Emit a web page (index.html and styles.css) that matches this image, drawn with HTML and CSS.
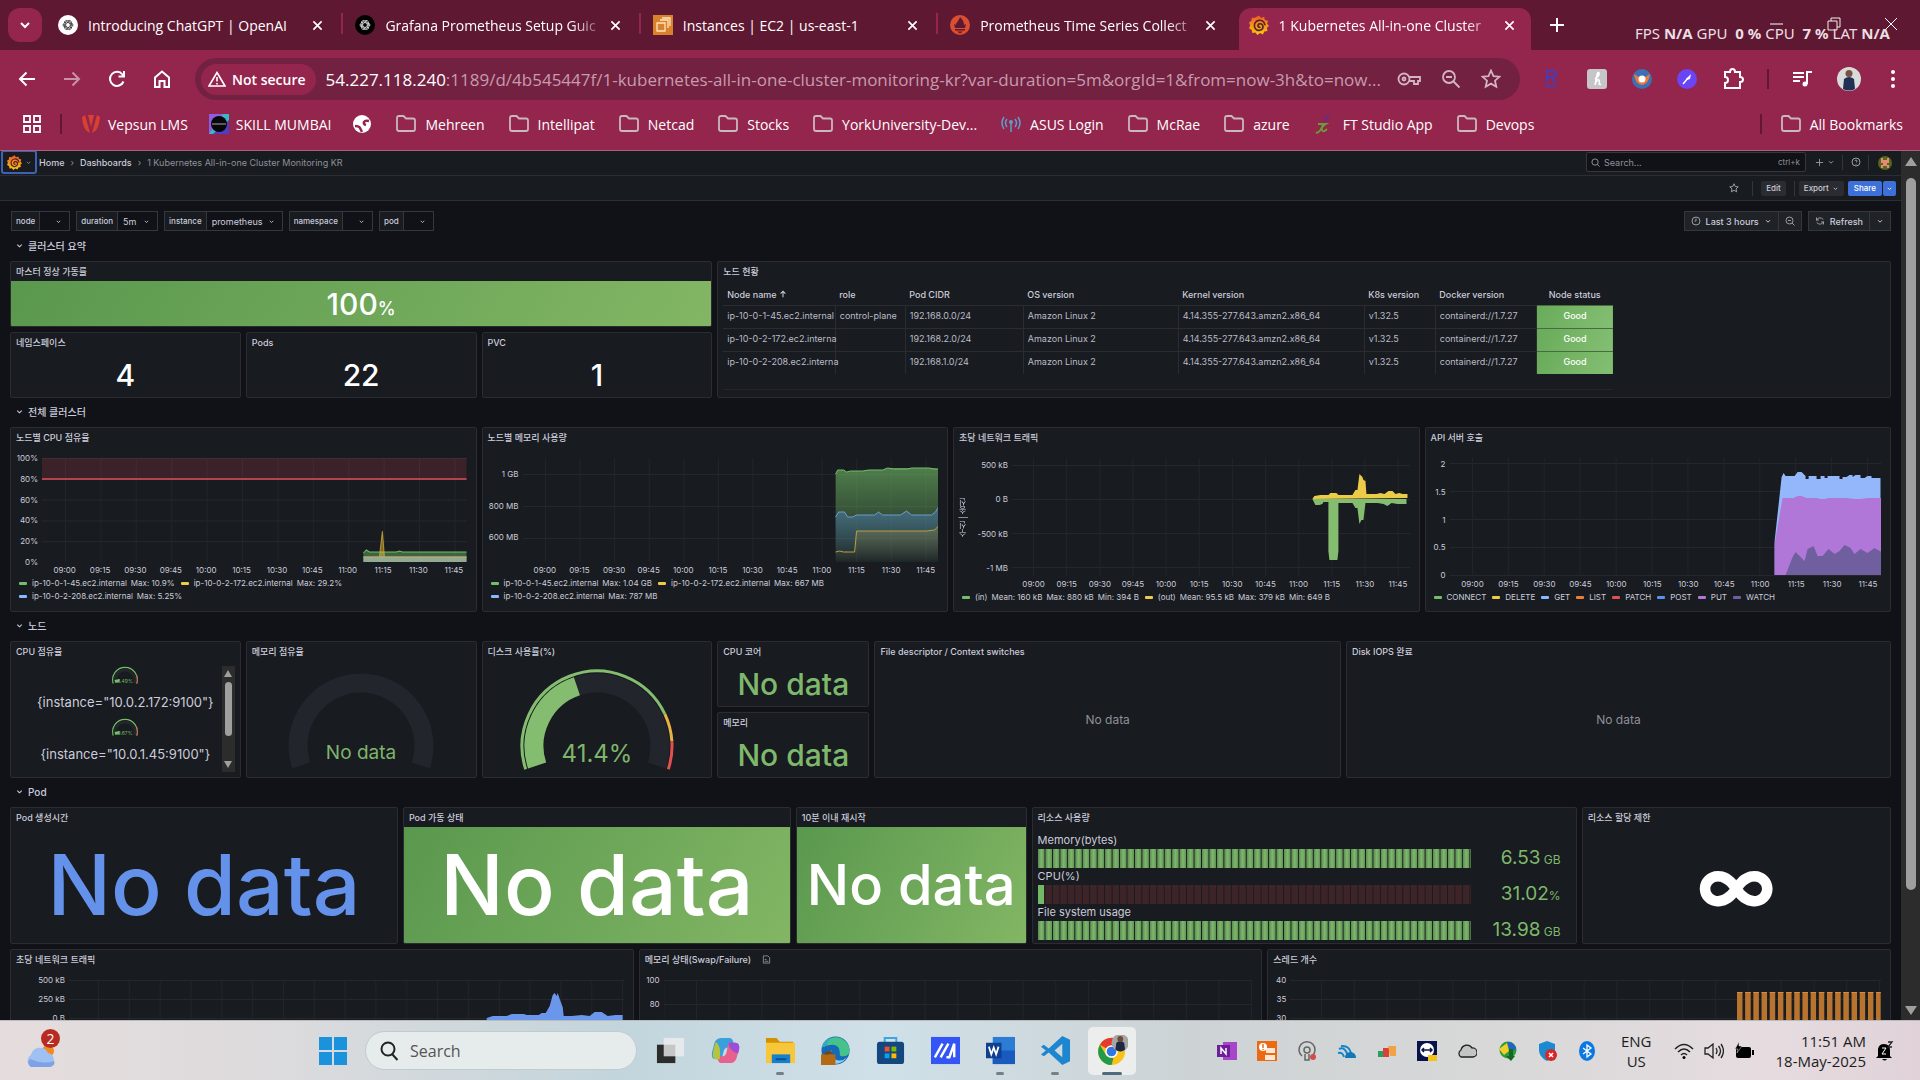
FILE: index.html
```html
<!DOCTYPE html>
<html lang="en">
<head>
<meta charset="utf-8">
<title>1 Kubernetes All-in-one Cluster Monitoring KR</title>
<link rel="stylesheet" href="styles.css">
</head>
<body>
<svg class="defs" aria-hidden="true">
  <defs>
    <symbol id="x" viewBox="0 0 12 12"><path d="M1.500 1.500l9 9M10.500 1.500l-9 9" fill="none" stroke="currentColor" stroke-width="1.800"/></symbol>
    <symbol id="chev" viewBox="0 0 10 10"><path d="M2.500 4l2.500 2.500 2.500-2.500" fill="none" stroke="currentColor" stroke-width="1.200"/></symbol>
    <symbol id="folder" viewBox="0 0 20 20"><path d="M1 4q0-2 2-2h4.500l2.500 2.500H17q2 0 2 2V15q0 2-2 2H3q-2 0-2-2z" fill="none" stroke="#c9b8be" stroke-width="1.800"/></symbol>
    <symbol id="knot" viewBox="0 0 24 24"><g fill="none" stroke="currentColor" stroke-width="1.300"><g id="kn"><path d="M12 5.200a3.600 3.600 0 0 1 6 2.800v5l-6 3.500"/><path d="M12 18.800a3.600 3.600 0 0 1-6-2.800v-5l6-3.500"/></g><use href="#kn" transform="rotate(60 12 12)"/><use href="#kn" transform="rotate(120 12 12)"/></g></symbol>
    <linearGradient id="gf" x1="0" y1="1" x2="0" y2="0"><stop offset="0" stop-color="#fbca0a"/><stop offset="1" stop-color="#f05a28"/></linearGradient>
    <symbol id="grafana" viewBox="0 0 24 24"><path d="M12 .5l2.500 3 3.700-1.300.8 3.900 3.900.9-1.200 3.600L24 13l-2.600 2.600.8 3.700-3.900.6-1.600 3.400-3.300-1.600L10 24l-2.200-3-3.800.7-.6-3.800L0 16l1.400-3.500L0 9l3-2 .2-3.800 3.800.2z" fill="url(#gf)"/><path d="M19 11.500C18 7.500 14.500 5.800 11.500 6.400 8 7.100 5.800 10.500 6.600 14c.7 3.200 3.700 5 6.600 4.300 2.500-.7 4-2.900 3.500-5.100-.5-2-2.300-3.100-4.100-2.600-1.500.5-2.100 1.900-1.700 3.100.4.900 1.200 1.300 2.100 1" fill="none" stroke="#54222f" stroke-width="2" stroke-linecap="round"/></symbol>
  </defs>
</svg>

<header class="browser">
  <div class="tabstrip">
    <button class="tabmenu" aria-label="Search tabs"><svg width="16" height="16" viewBox="0 0 16 16"><path d="M4 6l4 4 4-4" fill="none" stroke="#fff" stroke-width="2"/></svg></button>
    <div class="tabs">
      <div class="tab"><svg class="fav" viewBox="0 0 20 20"><circle cx="10" cy="10" r="10" fill="#fff"/><use href="#knot" x="3" y="3" width="14" height="14" color="#222"/></svg><span class="tt">Introducing ChatGPT | OpenAI</span><button aria-label="Close tab"><svg><use href="#x"/></svg></button></div>
      <div class="tab"><svg class="fav" viewBox="0 0 20 20"><circle cx="10" cy="10" r="10" fill="#000"/><use href="#knot" x="3" y="3" width="14" height="14" color="#fff"/></svg><span class="tt fade">Grafana Prometheus Setup Guic</span><button aria-label="Close tab"><svg><use href="#x"/></svg></button></div>
      <div class="tab"><svg class="fav" viewBox="0 0 20 20"><path d="M0 0h20v20H0z" fill="#d9822b"/><path d="M4 8h8v8H4zM7 5h8v8M9 3h8v8" fill="none" stroke="#ffe2bf" stroke-width="1.300"/></svg><span class="tt">Instances | EC2 | us-east-1</span><button aria-label="Close tab"><svg><use href="#x"/></svg></button></div>
      <div class="tab"><svg class="fav" viewBox="0 0 20 20"><circle cx="10" cy="10" r="10" fill="#da4e31"/><path d="M10 2c3 3 4 5 4 8l2-1-1 4H5l-1-4 2 1c0-3 3-4 4-8zM5 14h10v1.500H5zM7 16.500h6l-3 2z" fill="#5f1831"/></svg><span class="tt fade">Prometheus Time Series Collect</span><button aria-label="Close tab"><svg><use href="#x"/></svg></button></div>
      <div class="tab active"><svg class="fav"><use href="#grafana"/></svg><span class="tt fade">1 Kubernetes All-in-one Cluster</span><button aria-label="Close tab"><svg><use href="#x"/></svg></button></div>
    </div>
    <button class="plus" aria-label="New tab"><svg width="14" height="14" viewBox="0 0 14 14"><path d="M7 0v14M0 7h14" stroke="#fff" stroke-width="2"/></svg></button>
    <div class="winbtns">
      <svg width="14" height="14" viewBox="0 0 14 14"><path d="M0 7h13" stroke="#fff"/></svg>
      <svg width="14" height="14" viewBox="0 0 14 14"><path d="M1 4h9v9H1zM4 4V1h9v9h-3" fill="none" stroke="#eee"/></svg>
      <svg width="14" height="14" viewBox="0 0 14 14"><path d="M1 1l12 12M13 1L1 13" stroke="#fff"/></svg>
    </div>
    <div class="perf">FPS <b>N/A</b> GPU <b>&nbsp;0 %</b> CPU <b>&nbsp;7 %</b> LAT <b>N/A</b></div>
  </div>

  <div class="toolbar">
    <nav class="navbtns">
      <button aria-label="Back"><svg viewBox="0 0 20 20"><path d="M18 10H3M9.500 3.500L3 10l6.500 6.500"/></svg></button>
      <button aria-label="Forward" class="dim"><svg viewBox="0 0 20 20"><path d="M2 10h15M10.500 3.500L17 10l-6.500 6.500"/></svg></button>
      <button aria-label="Reload"><svg viewBox="0 0 20 20"><path d="M16.500 12.500A7 7 0 1 1 15.500 5.500L17 7M17 2v5.500h-5.500"/></svg></button>
      <button aria-label="Home"><svg viewBox="0 0 20 20"><path d="M3 8.500l7-6 7 6V18h-4.500v-6h-5v6H3z"/></svg></button>
    </nav>
    <div class="omni">
      <button class="chip"><svg width="18" height="16" viewBox="0 0 18 16"><path d="M9 1.500L17 15H1zM9 6v4.500M9 12v1.500" fill="none" stroke="#fff" stroke-width="1.600"/></svg>Not secure</button>
      <span class="url"><b>54.227.118.240</b>:1189/d/4b545447f/1-kubernetes-all-in-one-cluster-monitoring-kr?var-duration=5m&amp;orgId=1&amp;from=now-3h&amp;to=now...</span>
      <svg class="oi" width="24" height="20" viewBox="0 0 24 20"><circle cx="7" cy="10" r="5.500"/><circle cx="7" cy="10" r="1.500"/><path d="M12 8h11v4h-2v3h-4v-3h-5"/></svg>
      <svg class="oi" width="20" height="20" viewBox="0 0 20 20"><circle cx="8" cy="8" r="6"/><path d="M12.500 12.500l6 6M5 8h6"/></svg>
      <svg class="oi" width="20" height="20" viewBox="0 0 20 20"><path d="M10 1.500l2.500 5.600 6 .6-4.500 4 1.300 6L10 14.600 4.700 17.700l1.300-6-4.500-4 6-.6z"/></svg>
    </div>
    <div class="exts">
      <svg width="20" height="20" viewBox="0 0 20 20"><path d="M5 14V2h6q3 0 3 3t-3 3.500H5M10 8.500l4 5.500" fill="none" stroke="#513aa8" stroke-width="2.500"/><path d="M3 17.500h12" stroke="#513aa8" stroke-width="2"/></svg>
      <svg width="20" height="20" viewBox="0 0 20 20"><rect width="20" height="20" rx="3" fill="#c6c6c6"/><path d="M8 16l2-10q1-4 2-2t-4 6M8 15q3-6 4-4t0 4q1 1 2 0" fill="none" stroke="#fff" stroke-width="1.600"/></svg>
      <svg width="20" height="20" viewBox="0 0 20 20"><circle cx="10" cy="10" r="10" fill="#3d6fb4"/><path d="M2 5l5 3h6l5-3q-1 10-8 11Q3 15 2 5z" fill="#e97a3a"/><circle cx="10" cy="10" r="3.500" fill="#fff"/></svg>
      <svg width="20" height="20" viewBox="0 0 20 20"><circle cx="10" cy="10" r="10" fill="#6a45f5"/><path d="M6 15l5-6" stroke="#fff" stroke-width="1.500"/><path d="M9 10l5-5-1 5-3 1z" fill="#fff"/></svg>
      <svg width="22" height="22" viewBox="0 0 22 22"><path d="M3 4h5q0-3 2.500-3T13 4h5v5q3 0 3 2.500T18 14v6H3v-5q3 0 3-3T3 9z" fill="none" stroke="#fff" stroke-width="2"/></svg>
      <i class="bar"></i>
      <svg width="20" height="20" viewBox="0 0 20 20"><path d="M1 4h11M1 8h11M1 12h7M15 15V3h5" fill="none" stroke="#fff" stroke-width="2"/><circle cx="13" cy="15" r="2.500" fill="#fff"/></svg>
      <svg width="24" height="24" viewBox="0 0 24 24"><circle cx="12" cy="12" r="12" fill="#d8dcd8"/><path d="M6 22l1-10q5-4 10 0l1 10q-6 3-12 0z" fill="#1f2f55"/><circle cx="12" cy="6.500" r="3.500" fill="#7a5140"/></svg>
      <svg class="dots" width="6" height="20" viewBox="0 0 6 20"><g fill="#fff"><circle cx="3" cy="3" r="2"/><circle cx="3" cy="10" r="2"/><circle cx="3" cy="17" r="2"/></g></svg>
    </div>
  </div>

  <nav class="bookmarks">
    <svg width="18" height="18" viewBox="0 0 18 18"><path d="M1 1h6v6H1zM11 1h6v6h-6zM1 11h6v6H1zM11 11h6v6h-6z" fill="none" stroke="#fff" stroke-width="1.800"/></svg>
    <i class="bar"></i>
    <a href="#" class="site"><svg viewBox="0 0 20 20"><path d="M1 3l3-2 5 18q-7-2-8-16zM19 3l-3-2-5 18q7-2 8-16zM7 1h6l-3 12z" fill="#d8402f"/></svg>Vepsun LMS</a>
    <a href="#" class="site"><svg viewBox="0 0 20 20"><path d="M0 0h20v20H0z" fill="#3fb6c4"/><path d="M0 0h14L0 20z" fill="#8b5fe0"/><path d="M20 6v14H4z" fill="#4c3fc0"/><circle cx="10" cy="10" r="8" fill="#07070c"/><path d="M3 10h14" stroke="#aaa"/></svg>SKILL MUMBAI</a>
    <a href="#" aria-label="Web page"><svg viewBox="0 0 20 20"><circle cx="10" cy="10" r="9" fill="#fff"/><path d="M17 7q-4-1-5 1t2 3M3 12q4 0 5 2t2 4" fill="none" stroke="#94254d" stroke-width="2.500"/></svg></a>
    <a href="#"><svg><use href="#folder"/></svg>Mehreen</a>
    <a href="#"><svg><use href="#folder"/></svg>Intellipat</a>
    <a href="#"><svg><use href="#folder"/></svg>Netcad</a>
    <a href="#"><svg><use href="#folder"/></svg>Stocks</a>
    <a href="#"><svg><use href="#folder"/></svg>YorkUniversity-Dev...</a>
    <a href="#"><svg viewBox="0 0 20 20"><g fill="none" stroke="#5e9ccb" stroke-width="1.500"><path d="M6 13q-3-4 0-8M3 15Q-1 9 3 3M14 13q3-4 0-8M17 15q4-6 0-12M10 9v9"/></g><circle cx="10" cy="8" r="2" fill="#5e9ccb"/></svg>ASUS Login</a>
    <a href="#"><svg><use href="#folder"/></svg>McRae</a>
    <a href="#"><svg><use href="#folder"/></svg>azure</a>
    <a href="#"><svg viewBox="0 0 20 20"><path d="M15 1q-4 2-5 9" fill="none" stroke="#6b2a8a" stroke-width="2"/><path d="M4 10h8q-5 3-4 6t5-1M9 10q-2 8-7 9" fill="none" stroke="#6f9a35" stroke-width="1.800"/></svg>FT Studio App</a>
    <a href="#"><svg><use href="#folder"/></svg>Devops</a>
    <span class="grow"></span>
    <i class="bar"></i>
    <a href="#"><svg><use href="#folder"/></svg>All Bookmarks</a>
  </nav>
</header>

<div class="view">
<div class="app">
  <div class="gbar">
    <button class="glogo" aria-label="Menu"><svg width="15" height="15"><use href="#grafana"/></svg><svg width="7" height="7"><use href="#chev"/></svg></button>
    <nav class="crumbs"><a href="#">Home</a><i>›</i><a href="#">Dashboards</a><i>›</i><span>1 Kubernetes All-in-one Cluster Monitoring KR</span></nav>
    <label class="search"><svg width="9" height="9" viewBox="0 0 10 10"><circle cx="4.500" cy="4.500" r="3.500"/><path d="M7 7l2.500 2.500"/></svg><input type="text" placeholder="Search..." aria-label="Search"><kbd>ctrl+k</kbd></label>
    <button class="plain" aria-label="New"><svg width="9" height="9" viewBox="0 0 10 10"><path d="M5 1v8M1 5h8"/></svg><svg width="8" height="8"><use href="#chev"/></svg></button>
    <i class="sep"></i>
    <button class="plain" aria-label="Help"><svg width="10" height="10" viewBox="0 0 10 10"><circle cx="5" cy="5" r="4"/><path d="M4 4q0-1 1-1t1 1-1 1.500M5 7v.8"/></svg></button>
    <i class="sep"></i>
    <svg class="me" width="15" height="15" viewBox="0 0 15 15"><circle cx="8" cy="8" r="7" fill="#56661f"/><path d="M4 3h2v2h4V3h2v5h-2v2h2v3h-2v-2H6v2H4v-3h2V8H4z" fill="#e58a74"/></svg>
  </div>
  <div class="gbar second">
    <button class="plain" aria-label="Star"><svg width="10" height="10" viewBox="0 0 20 20"><path stroke-width="2" d="M10 1.500l2.500 5.600 6 .6-4.500 4 1.300 6L10 14.600 4.700 17.700l1.300-6-4.500-4 6-.6z"/></svg></button>
    <i class="sep"></i>
    <button class="btn">Edit</button>
    <i class="sep"></i>
    <button class="btn">Export<svg width="7" height="7"><use href="#chev"/></svg></button>
    <span class="pair"><button class="btn blue">Share</button><button class="btn blue" aria-label="More"><svg width="7" height="7"><use href="#chev"/></svg></button></span>
  </div>

  <div class="vars">
    <div class="var"><label for="v1">node</label><span class="sel w30"><select id="v1"><option></option></select><svg><use href="#chev"/></svg></span></div>
    <div class="var"><label for="v2">duration</label><span class="sel w40"><select id="v2"><option>5m</option></select><svg><use href="#chev"/></svg></span></div>
    <div class="var"><label for="v3">instance</label><span class="sel w76"><select id="v3"><option>prometheus</option></select><svg><use href="#chev"/></svg></span></div>
    <div class="var"><label for="v4">namespace</label><span class="sel w30"><select id="v4"><option></option></select><svg><use href="#chev"/></svg></span></div>
    <div class="var"><label for="v5">pod</label><span class="sel w30"><select id="v5"><option></option></select><svg><use href="#chev"/></svg></span></div>
    <span class="grow"></span>
    <div class="time">
      <button><svg width="10" height="10" viewBox="0 0 10 10"><circle cx="5" cy="5" r="4"/><path d="M5 2.500V5H3.500"/></svg>Last 3 hours<svg width="8" height="8"><use href="#chev"/></svg></button>
      <button aria-label="Zoom out"><svg width="10" height="10" viewBox="0 0 10 10"><circle cx="4.500" cy="4.500" r="3.500"/><path d="M7 7l2.500 2.500M3 4.500h3"/></svg></button>
    </div>
    <div class="time">
      <button><svg width="10" height="10" viewBox="0 0 10 10"><path d="M1.500 4.500V1.500M1.500 4h2.500M1.700 3.800Q4.500 0 8.300 3.500M8.500 5.500v3M8.500 6H6M8.300 6.200Q5.500 10 1.700 6.500"/></svg>Refresh</button>
      <button aria-label="Refresh interval"><svg width="8" height="8"><use href="#chev"/></svg></button>
    </div>
  </div>

  <h2 class="row"><svg><use href="#chev"/></svg>클러스터 요약</h2>
  <div class="grid two">
    <section class="panel c9"><h3>마스터 정상 가동률</h3><div class="stat fill s30"><span>100<small>%</small></span></div></section>
    <section class="panel c15 tall"><h3>노드 현황</h3>
      <table>
        <colgroup><col class="k1"><col class="k2"><col class="k3"><col class="k4"><col class="k5"><col class="k6"><col class="k7"><col class="k8"></colgroup>
        <thead><tr><th>Node name <svg width="8" height="8" viewBox="0 0 10 10"><path d="M5 9V2M2 4.500L5 1.500l3 3" fill="none" stroke="currentColor" stroke-width="1.300"/></svg></th><th>role</th><th>Pod CIDR</th><th>OS version</th><th>Kernel version</th><th>K8s version</th><th>Docker version</th><th>Node status</th></tr></thead>
        <tbody>
          <tr><td>ip-10-0-1-45.ec2.internal</td><td>control-plane</td><td>192.168.0.0/24</td><td>Amazon Linux 2</td><td>4.14.355-277.643.amzn2.x86_64</td><td>v1.32.5</td><td>containerd://1.7.27</td><td>Good</td></tr>
          <tr><td>ip-10-0-2-172.ec2.interna</td><td></td><td>192.168.2.0/24</td><td>Amazon Linux 2</td><td>4.14.355-277.643.amzn2.x86_64</td><td>v1.32.5</td><td>containerd://1.7.27</td><td>Good</td></tr>
          <tr><td>ip-10-0-2-208.ec2.interna</td><td></td><td>192.168.1.0/24</td><td>Amazon Linux 2</td><td>4.14.355-277.643.amzn2.x86_64</td><td>v1.32.5</td><td>containerd://1.7.27</td><td>Good</td></tr>
        </tbody>
      </table>
      <div class="tfoot"></div>
    </section>
    <section class="panel c3"><h3>네임스페이스</h3><div class="stat s30">4</div></section>
    <section class="panel c3"><h3>Pods</h3><div class="stat s30">22</div></section>
    <section class="panel c3"><h3>PVC</h3><div class="stat s30">1</div></section>
  </div>

  <h2 class="row"><svg><use href="#chev"/></svg>전체 클러스터</h2>
  <div class="grid charts">
    <section class="panel c6"><h3>노드별 CPU 점유율</h3>
      <div class="chart cpu">
        <div class="y"><span>100%</span><span>80%</span><span>60%</span><span>40%</span><span>20%</span><span>0%</span></div>
        <div class="plot"><svg viewBox="0 0 424 104" preserveAspectRatio="none">
          <path d="M0 0h424v21H0z" fill="#f2495c" opacity=".16"/><path d="M0 21h424" stroke="#b5434f" stroke-width="2"/>
          <path d="M321 104V95l3-3 3 2h27l3-1 3 1h64v10z" fill="#73bf69" opacity=".45"/><path d="M321 95l3-3 3 2h27l3-1 3 1h64" fill="none" stroke="#73bf69"/>
          <path d="M321 104v-5h103v5z" fill="#93a994"/><path d="M321 99h103" stroke="#9cb8c0"/>
          <path d="M321 99h16l3-26 2 26h82" fill="#eab839" fill-opacity=".5" stroke="#c9a63a" stroke-opacity=".8"/></svg></div>
        <div class="x"><span>09:00</span><span>09:15</span><span>09:30</span><span>09:45</span><span>10:00</span><span>10:15</span><span>10:30</span><span>10:45</span><span>11:00</span><span>11:15</span><span>11:30</span><span>11:45</span></div>
      </div>
      <div class="legend"><span class="g">ip-10-0-1-45.ec2.internal <em>Max: 10.9%</em></span><span class="ye">ip-10-0-2-172.ec2.internal <em>Max: 29.2%</em></span><span class="b">ip-10-0-2-208.ec2.internal <em>Max: 5.25%</em></span></div>
    </section>
    <section class="panel c6"><h3>노드별 메모리 사용량</h3>
      <div class="chart mem">
        <div class="y"><span>1 GB</span><span>800 MB</span><span>600 MB</span></div>
        <div class="plot"><svg viewBox="0 0 416 104" preserveAspectRatio="none">
          <defs><linearGradient id="m1" x1="0" y1="0" x2="0" y2="1"><stop offset="0" stop-color="#73bf69" stop-opacity=".6"/><stop offset="1" stop-color="#73bf69" stop-opacity=".05"/></linearGradient>
          <linearGradient id="m2" x1="0" y1="0" x2="0" y2="1"><stop offset="0" stop-color="#5794f2" stop-opacity=".38"/><stop offset="1" stop-color="#5794f2" stop-opacity=".02"/></linearGradient>
          <linearGradient id="m3" x1="0" y1="0" x2="0" y2="1"><stop offset="0" stop-color="#eab839" stop-opacity=".22"/><stop offset="1" stop-color="#eab839" stop-opacity="0"/></linearGradient></defs>
          <path d="M313 104V16l2-4h6l3 2 4-1h12l6-1h14l5-2h46l5 1v93z" fill="url(#m1)"/><path d="M313 16l2-4h6l3 2 4-1h12l6-1h14l5-2 6 1h14l4-1h18l4 1 5 0" fill="none" stroke="#73bf69"/>
          <path d="M313 104V59l3-5h6l3 5h5l4-2h18l4-3 4 3h18l6-4 5 4h20l4-3 3-5v55z" fill="url(#m2)"/><path d="M313 59l3-5h6l3 5h5l4-2h18l4-3 4 3h18l6-4 5 4h20l4-3 3-5" fill="none" stroke="#6f9ccb"/>
          <path d="M313 104V94h19l2-21h70l8-1 4-4v36z" fill="url(#m3)"/><path d="M313 94l4-1 4 1h11l2-21h70l8-1 4-4" fill="none" stroke="#b7a140"/></svg></div>
        <div class="x"><span>09:00</span><span>09:15</span><span>09:30</span><span>09:45</span><span>10:00</span><span>10:15</span><span>10:30</span><span>10:45</span><span>11:00</span><span>11:15</span><span>11:30</span><span>11:45</span></div>
      </div>
      <div class="legend"><span class="g">ip-10-0-1-45.ec2.internal <em>Max: 1.04 GB</em></span><span class="ye">ip-10-0-2-172.ec2.internal <em>Max: 667 MB</em></span><span class="b">ip-10-0-2-208.ec2.internal <em>Max: 787 MB</em></span></div>
    </section>
    <section class="panel c6"><h3>초당 네트워크 트래픽</h3>
      <div class="chart net">
        <div class="ylab">수신 | 송신</div>
        <div class="y"><span>500 kB</span><span>0 B</span><span>-500 kB</span><span>-1 MB</span></div>
        <div class="plot"><svg viewBox="0 0 397 118" preserveAspectRatio="none">
          <path d="M300 41l2-3 6-1h8l2-2h6l2 2h14l3-5h2l2-16 3 3 1 3 2 1 1 13h10l4-1 4 1 4-3h4l3 3 4-1 3 1h5v4z" fill="#eccb48"/>
          <path d="M300 41l3 6h4l3-1 1-2h5v49l1 9h8l1-9V45h14l3 5h2l2 16 2-4 2 0 2-17h12l6 1 4 2 4-3 6 1h9v-5z" fill="#84bd6f"/></svg></div>
        <div class="x"><span>09:00</span><span>09:15</span><span>09:30</span><span>09:45</span><span>10:00</span><span>10:15</span><span>10:30</span><span>10:45</span><span>11:00</span><span>11:15</span><span>11:30</span><span>11:45</span></div>
      </div>
      <div class="legend"><span class="g">(in) <em>Mean: 160 kB</em> <em>Max: 880 kB</em> <em>Min: 394 B</em></span><span class="ye">(out) <em>Mean: 95.5 kB</em> <em>Max: 379 kB</em> <em>Min: 649 B</em></span></div>
    </section>
    <section class="panel c6"><h3>API 서버 호출</h3>
      <div class="chart api">
        <div class="y"><span>2</span><span>1.5</span><span>1</span><span>0.5</span><span>0</span></div>
        <div class="plot"><svg viewBox="0 0 432 118" preserveAspectRatio="none">
          <path d="M325 117V83l7-64 2-4 2 3h9l3-4h4l4 4v3h3v-3h8v3h4v-3h4v2h3v-2h12v3h3v-2h4l3-2h3v2l3-2h5v3h4l3-2h4v2h9v97z" fill="#94b6fa"/>
          <path d="M325 117V86l8-46h11l4-2h4l5 2h10l4 1h4l4-1h18l8 1h6l8-1h13v77z" fill="#b077d9"/>
          <path d="M336 117l7-18 3-5 4 4 5 5 3-12 6-3 4 10 5 0 6-7 6 5 5-3 5-6 6 3 4 6 6-5 7 4 7-5 7 4v23z" fill="#6f5f9f"/></svg></div>
        <div class="x"><span>09:00</span><span>09:15</span><span>09:30</span><span>09:45</span><span>10:00</span><span>10:15</span><span>10:30</span><span>10:45</span><span>11:00</span><span>11:15</span><span>11:30</span><span>11:45</span></div>
      </div>
      <div class="legend"><span class="g">CONNECT</span><span class="ye">DELETE</span><span class="b">GET</span><span class="o">LIST</span><span class="r">PATCH</span><span class="db">POST</span><span class="p">PUT</span><span class="dp">WATCH</span></div>
    </section>
  </div>

  <h2 class="row"><svg><use href="#chev"/></svg>노드</h2>
  <div class="grid two">
    <section class="panel c3 tall"><h3>CPU 점유율</h3>
      <div class="minis">
        <div class="minilist">
          <svg width="28" height="20" viewBox="0 0 28 20"><path d="M2.300 17.500A12.300 12.300 0 1 1 25.700 17.500" fill="none" stroke="#73bf69" stroke-width="1.200"/><path d="M25.200 9.500a12.300 12.300 0 0 1 .5 8" fill="none" stroke="#e0504f" stroke-width="1.200"/><path d="M4.500 17a10 10 0 1 1 19 0" fill="none" stroke="#24262c" stroke-width="3"/><path d="M4.500 17l-1-3 5-1v3z" fill="#73bf69"/><text x="14" y="17" font-size="5" text-anchor="middle" fill="#73bf69">6.49%</text></svg>
          <p>{instance="10.0.2.172:9100"}</p>
          <svg width="28" height="20" viewBox="0 0 28 20"><path d="M2.300 17.500A12.300 12.300 0 1 1 25.700 17.500" fill="none" stroke="#73bf69" stroke-width="1.200"/><path d="M25.200 9.500a12.300 12.300 0 0 1 .5 8" fill="none" stroke="#e0504f" stroke-width="1.200"/><path d="M4.500 17a10 10 0 1 1 19 0" fill="none" stroke="#24262c" stroke-width="3"/><path d="M4.500 17l-1-3 5-1v3z" fill="#73bf69"/><text x="14" y="17" font-size="5" text-anchor="middle" fill="#73bf69">9.67%</text></svg>
          <p>{instance="10.0.1.45:9100"}</p>
        </div>
        <div class="minibar"><i class="up"></i><i class="thumb"></i><i class="down"></i></div>
      </div>
    </section>
    <section class="panel c3 tall"><h3>메모리 점유율</h3>
      <div class="gauge"><svg width="160" height="108" viewBox="0 0 160 108"><path d="M20.100 99.500A63 63 0 1 1 139.900 99.500" fill="none" stroke="#22252b" stroke-width="19"/><text x="80" y="93" font-size="19" text-anchor="middle" fill="#7eb56c">No data</text></svg></div>
    </section>
    <section class="panel c3 tall"><h3>디스크 사용률(%)</h3>
      <div class="gauge"><svg width="160" height="108" viewBox="0 0 160 108"><path d="M20.100 99.500A63 63 0 1 1 139.900 99.500" fill="none" stroke="#22252b" stroke-width="19"/><path d="M20.100 99.500A63 63 0 0 1 59.900 20.300" fill="none" stroke="#84bd70" stroke-width="19"/><g fill="none" stroke-width="3"><path d="M8.700 103.200A75 75 0 0 1 147.900 48.100" stroke="#84bd70"/><path d="M147.900 48.100A75 75 0 0 1 154.900 75.300" stroke="#e8b143"/><path d="M154.900 75.300A75 75 0 0 1 151.300 103.200" stroke="#e0504f"/></g><text x="80" y="96" font-size="24" text-anchor="middle" fill="#7eb56c">41.4%</text></svg></div>
    </section>
    <section class="panel c2"><h3>CPU 코어</h3><div class="stat s30 green">No data</div></section>
    <section class="panel c6 tall"><h3>File descriptor / Context switches</h3><div class="none">No data</div></section>
    <section class="panel c7 tall"><h3>Disk IOPS 완료</h3><div class="none">No data</div></section>
    <section class="panel c2"><h3>메모리</h3><div class="stat s30 green">No data</div></section>
  </div>

  <h2 class="row"><svg><use href="#chev"/></svg>Pod</h2>
  <div class="grid pods">
    <section class="panel c5"><h3>Pod 생성시간</h3><div class="stat s84 bluetext">No data</div></section>
    <section class="panel c5"><h3>Pod 가동 상태</h3><div class="stat fill s84">No data</div></section>
    <section class="panel c3"><h3>10분 이내 재시작</h3><div class="stat fill s56">No data</div></section>
    <section class="panel c7"><h3>리소스 사용량</h3>
      <div class="bars">
        <div class="bargauge"><p>Memory(bytes)</p><div class="cells full"></div><output>6.53<small> GB</small></output></div>
        <div class="bargauge"><p>CPU(%)</p><div class="cells low"></div><output>31.02<small>%</small></output></div>
        <div class="bargauge"><p>File system usage</p><div class="cells full"></div><output>13.98<small> GB</small></output></div>
      </div>
    </section>
    <section class="panel c4"><h3>리소스 할당 제한</h3><div class="stat inf">∞</div></section>

    <section class="panel c8"><h3>초당 네트워크 트래픽</h3>
      <div class="chart n2"><div class="y"><span>500 kB</span><span>250 kB</span><span>0 B</span></div>
      <div class="plot"><svg viewBox="0 0 555 118" preserveAspectRatio="none"><path d="M418 40v-2l6-2h14l5-2h12l3 1h12l3-2h4l4-7 3-11 2-2 2 3 1-3 2 6 3 8 1 9h8l10-1 8 1 5-4h7l6 4 8-1 7 0v6z" fill="#6a97ec"/></svg></div></div>
    </section>
    <section class="panel c8"><h3>메모리 상태(Swap/Failure)<svg width="9" height="9" viewBox="0 0 10 10"><path d="M1.500 1h5L8.500 3v6h-7zM3 5h2M3 7h4M6 5v0" fill="none" stroke="#8e9099"/></svg></h3>
      <div class="chart n3"><div class="y"><span>100</span><span>80</span></div><div class="plot"></div></div>
    </section>
    <section class="panel c8"><h3>스레드 개수</h3>
      <div class="chart n4"><div class="y"><span>40</span><span>35</span><span>30</span></div>
      <div class="plot"><svg viewBox="0 0 592 118" preserveAspectRatio="none"><defs><pattern id="th" x="448" y="0" width="8.200" height="118" patternUnits="userSpaceOnUse"><path d="M0 0h5.500v118H0z" fill="#b8742f"/><path d="M0 0h5.500v2H0z" fill="#f2933a"/></pattern></defs><path d="M448 12h144v106H448z" fill="url(#th)"/><path d="M448 12.500h144" stroke="#dd8a3c" stroke-dasharray="5.500 2.700"/></svg></div></div>
    </section>
  </div>
</div>
<div class="scroll"><i class="up"></i><i class="thumb"></i><i class="down"></i></div>
</div>

<footer class="taskbar">
  <button class="weather" aria-label="Weather"><svg width="36" height="40" viewBox="0 0 36 40"><circle cx="24" cy="20" r="6" fill="#f08a24"/><path d="M7 36a7 7 0 0 1 0-12 9 9 0 0 1 17-2 7.500 7.500 0 0 1 2 14z" fill="#9fc0f2"/><path d="M7 36q-5-4-1-8 14 6 24 2 2 4-4 6z" fill="#7da3e6"/></svg><b>2</b></button>
  <button aria-label="Start"><svg width="30" height="30" viewBox="0 0 30 30"><path d="M1 1h13v13H1zM16 1h13v13H16zM1 16h13v13H1zM16 16h13v13H16z" fill="#1a93dc"/></svg></button>
  <label class="tsearch"><svg width="20" height="20" viewBox="0 0 20 20"><circle cx="9" cy="8" r="6.500" fill="none" stroke="#222" stroke-width="2"/><path d="M13 13l5.500 6" stroke="#222" stroke-width="2"/></svg><input type="text" placeholder="Search" aria-label="Search Windows"></label>
  <div class="apps">
    <button aria-label="Task view"><svg viewBox="0 0 32 32"><path d="M2 10h19v19H2z" fill="#2c2c2c"/><path d="M9 3h21v19H9z" fill="#ededed" opacity=".8"/></svg></button>
    <button aria-label="Copilot"><svg viewBox="0 0 32 32"><path d="M12 3h8q3 0 4 4l2 6h-7q-4 0-5 4l-2 8H6q-5 0-4-7l3-11q2-4 7-4z" fill="#3aa0dd"/><path d="M20 29h-8q-3 0-4-4l-1-3h5q4 0 5-4l2-10h7q5 0 4 7l-3 10q-2 4-7 4z" fill="#e8618c"/><path d="M4 14l2-7q6 4 4 18H6q-5 0-2-11z" fill="#b6c53c"/><path d="M19 8h7q5 0 4 7l-1 4q-9-2-10-11z" fill="#9b4fd8"/></svg></button>
    <button class="run" aria-label="File Explorer"><svg viewBox="0 0 32 32"><path d="M1 3h11l3 4h14v6H1z" fill="#d29200"/><path d="M1 8h30v21H1z" fill="#f8c63a"/><path d="M7 20h19v9H7z" fill="#1580cf"/><path d="M11 24h11v2H11z" fill="#0b4f8f"/></svg></button>
    <button aria-label="Edge"><svg viewBox="0 0 32 32"><circle cx="16" cy="16" r="14.500" fill="#1668b8"/><path d="M2 13A14.500 14.500 0 0 1 30.500 16q0 6-7 6-4 0-3-4 0-7-7-8-7 0-11.500 3z" fill="#45c38b"/><path d="M2 13Q7 3 17 2q-9 1-10 9z" fill="#2aa5dc"/><path d="M12 15q-3 9 6 11 6 1 10-3-5 7-13 7Q5 27 12 15z" fill="#8fd0ee"/><path d="M1 20h15v11H1z" fill="#b36a12"/><path d="M5 17h7v3H5z" fill="#7b4507"/></svg></button>
    <button aria-label="Store"><svg viewBox="0 0 32 32"><path d="M10 8V3h12v5" fill="none" stroke="#39a7e6" stroke-width="2"/><rect x="2" y="7" width="28" height="23" rx="3" fill="#14477f"/><path d="M10 12h5v5h-5z" fill="#f25022"/><path d="M17 12h5v5h-5z" fill="#7fba00"/><path d="M10 19h5v5h-5z" fill="#00a4ef"/><path d="M17 19h5v5h-5z" fill="#ffb900"/></svg></button>
    <button aria-label="MyASUS"><svg viewBox="0 0 32 32"><path d="M1 2h30v28H1z" fill="#3455f5"/><path d="M5 23l8-14M11 23l8-14M17 23h3l5-14v14" fill="none" stroke="#fff" stroke-width="2.500"/></svg></button>
    <button class="run" aria-label="Word"><svg viewBox="0 0 32 32"><path d="M8 2h23v28H8z" fill="#2b7cd3"/><path d="M8 16h23v14H8z" fill="#185abd"/><path d="M1 8h16v16H1z" fill="#103f91"/><path d="M4 12l2.500 8L9 13l2.500 7L14 12" fill="none" stroke="#fff" stroke-width="1.800"/></svg></button>
    <button class="run" aria-label="VS Code"><svg viewBox="0 0 32 32"><path d="M23 1l8 4v22l-8 4L9 18l-5 4-3-2 5-4-5-4 3-2 5 4zM23 9l-8 7 8 7z" fill="#1d86cf" fill-rule="evenodd"/></svg></button>
    <button class="run on" aria-label="Chrome"><svg viewBox="0 0 32 32"><circle cx="15" cy="17" r="14" fill="#fbc116"/><path d="M15 17L3 10A14 14 0 0 1 28 11H15z" fill="#e33b2e"/><path d="M15 31A14 14 0 0 1 3 10l7 12 7 2z" fill="#229a4a"/><circle cx="15" cy="17" r="6.500" fill="#fff"/><circle cx="15" cy="17" r="5" fill="#2f77e5"/><circle cx="24" cy="8" r="9" fill="#a5a7a4"/><path d="M19 15l1-7q4-3 8 0l1 7q-5 4-10 0z" fill="#1d2843"/><circle cx="24" cy="4" r="3" fill="#6f4a3a"/></svg></button>
  </div>
  <span class="grow"></span>
  <div class="tray">
    <svg viewBox="0 0 20 20"><path d="M6 1h14v18H6z" fill="#a746c9"/><path d="M0 4h13v12H0z" fill="#6c1f96"/><path d="M4 13V7l5 6V7" fill="none" stroke="#fff" stroke-width="1.500"/></svg>
    <svg viewBox="0 0 20 20"><path d="M0 0h20v20H0z" fill="#ec6a12"/><path d="M9 7h9v5H9zM8 14h10v5H8z" fill="#ffe7d6"/><circle cx="6" cy="6" r="4" fill="#fff"/><path d="M6 3v4M6 8v1" stroke="#ec6a12" stroke-width="1.500"/></svg>
    <svg viewBox="0 0 20 20"><g fill="none" stroke="#666" stroke-width="1.500"><circle cx="10" cy="9" r="3"/><path d="M5 15a8 8 0 1 1 10 0M8 13v6h4v-6"/></g><circle cx="16" cy="16" r="3" fill="#d84a4a"/></svg>
    <svg viewBox="0 0 20 20"><path d="M2 8q6-3 9 7M1 12q5-1 6 4M4 5q8-1 10 7" fill="none" stroke="#1485c9" stroke-width="2"/><path d="M8 17q0-6 6-6 5 1 5 6z" fill="#1376b5"/></svg>
    <svg viewBox="0 0 20 20"><path d="M1 10h5v6H1z" fill="#279f63"/><path d="M6 7h6v9H6z" fill="#d8403a"/><path d="M11 5h8v10h-6z" fill="#f0a244"/></svg>
    <svg viewBox="0 0 20 20"><path d="M0 0h20v20H0z" fill="#09124a"/><circle cx="10" cy="9" r="7" fill="#fff"/><path d="M5 9h10M7 7L5 9l2 2M13 7l2 2-2 2" fill="none" stroke="#09124a" stroke-width="1.500"/><path d="M11 14h9v6h-9z" fill="#f3c317"/></svg>
    <svg viewBox="0 0 20 20"><path d="M4 16a4 4 0 0 1 0-7 6 6 0 0 1 11-2 4.500 4.500 0 0 1 1 9z" fill="#c4c4c4" stroke="#222" stroke-width="1.300"/></svg>
    <svg viewBox="0 0 20 20"><circle cx="11" cy="9" r="8.500" fill="#2c9b3c"/><path d="M10 1a8 8 0 0 1 9 7l-6 3z" fill="#2362c8"/><path d="M2 8l8-6 2 8-5 4z" fill="#f0cf28"/><path d="M12 8v7h-3l5 5 4-5h-2V8z" fill="#14691f"/></svg>
    <svg viewBox="0 0 20 20"><path d="M10 0l8 3v6q0 7-8 11Q2 16 2 9V3z" fill="#1b8ad0"/><circle cx="14" cy="14" r="6" fill="#d32929"/><path d="M12 12l4 4M16 12l-4 4" stroke="#fff" stroke-width="1.500"/></svg>
    <svg viewBox="0 0 20 20"><ellipse cx="10" cy="10" rx="8" ry="10" fill="#0a78e0"/><path d="M6 7l8 6-4 3V4l4 3-8 6" fill="none" stroke="#fff" stroke-width="1.300"/></svg>
  </div>
  <div class="lang">ENG<br>US</div>
  <div class="sys">
    <svg width="20" height="18" viewBox="0 0 20 18"><path d="M1 7q9-9 18 0M4 10q6-6 12 0M7 13q3-3 6 0" fill="none" stroke="#222" stroke-width="1.500"/><circle cx="10" cy="15.500" r="1.500"/></svg>
    <svg width="20" height="18" viewBox="0 0 20 18"><path d="M1 6h3l5-4v14l-5-4H1zM12 6q2 3 0 6M14.500 4q4 5 0 10M17 2q5 7 0 14" fill="none" stroke="#222" stroke-width="1.300"/></svg>
    <svg width="20" height="18" viewBox="0 0 20 18"><rect x="2" y="5" width="15" height="11" rx="2"/><path d="M18 8h2v5h-2z"/><path d="M5 0L1 7h3l-1 4 5-7H5z" stroke="#ddd" stroke-width=".5"/></svg>
  </div>
  <div class="clock">11:51 AM<br>18-May-2025</div>
  <svg class="bell" width="18" height="20" viewBox="0 0 18 20"><path d="M2 15V8q1-5 6-5 6 0 6 6v6l2 2H0zM6 18h5q-2 3-5 0z"/><path d="M12 1h4l-4 5h4" fill="none" stroke="#222" stroke-width="1.300"/><path d="M6 7h4l-4 6h4" fill="none" stroke="#fff"/></svg>
</footer>
</body>
</html>
```
FILE: styles.css
```css
* { box-sizing: border-box; }
body { margin: 0; height: 100vh; overflow: hidden; display: flex; flex-direction: column; background: #111217; font-family: Inter, "Noto Sans CJK KR", sans-serif; color: #ccccdc; }
button { border: 0; background: none; padding: 0; margin: 0; font: inherit; color: inherit; display: flex; align-items: center; justify-content: center; }
input, select { font: inherit; color: inherit; border: 0; background: none; padding: 0; margin: 0; min-width: 0; outline: 0; }
a { color: inherit; text-decoration: none; }
p, h2, h3 { margin: 0; font-weight: 400; }
i, em { font-style: normal; }
.defs { position: absolute; width: 0; height: 0; }
.grow { flex: 1; }

/* Browser chrome */
.browser { flex: none; height: 151px; background: #94254d; border-bottom: 1px solid #a5607c; font-family: "Open Sans", sans-serif; color: #fff; }
.tabstrip { position: relative; height: 50px; display: flex; background: #5f1831; padding: 8px 0 0 8px; }
.tabmenu { width: 34px; height: 34px; border-radius: 12px; background: #94254d; margin-right: 4px; }
.tabs { display: grid; grid-template-columns: repeat(5, minmax(0, 1fr)); width: 78%; max-width: 1487px; }
.tab { min-width: 0; display: flex; align-items: center; height: 42px; padding: 0 18px 8px 12px; font-size: 14px; border-right: 2px solid transparent; border-image: linear-gradient(transparent 6px, #94254d 6px 26px, transparent 26px) 1; }
.tab:nth-child(4) { border-image: none; }
.tab.active { background: #94254d; border: 0; border-radius: 12px 12px 0 0; margin: 0 2px 0 3px; padding: 0 16px 8px 10px; }
.fav { width: 20px; height: 20px; flex: none; }
.tt { flex: 1; min-width: 0; white-space: nowrap; margin: 0 14px 0 10px; }
.fade { mask-image: linear-gradient(90deg, #000 88%, #0005); }
.tab button svg { width: 11px; height: 11px; }
.plus { width: 34px; height: 34px; margin-left: 7px; }
.winbtns { position: absolute; right: 22px; top: 17px; display: flex; gap: 43px; }
.perf { position: absolute; right: 30px; top: 23px; font: 15px/20px "Noto Sans", sans-serif; color: #e9dfe3; }
.toolbar { display: flex; align-items: center; padding: 8px 24px 0 17px; }
.navbtns { display: flex; gap: 25px; margin-right: 23px; }
.navbtns svg { width: 20px; height: 20px; fill: none; stroke: #fff; stroke-width: 2; }
.dim { opacity: .5; }
.omni { flex: 1; min-width: 0; height: 42px; border-radius: 21px; background: #732141; display: flex; align-items: center; padding: 0 19px 0 6px; gap: 20px; }
.chip { height: 31px; flex: none; border-radius: 16px; background: #94254d; padding: 0 10px 0 7px; gap: 6px; font-size: 14px; font-weight: 600; margin-right: -10px; }
.url { flex: 1; min-width: 0; white-space: nowrap; font-size: 17px; color: #c79bad; }
.url b { font-weight: 400; color: #fff; }
.oi { flex: none; fill: none; stroke: #d3b4c0; stroke-width: 1.800; }
.exts { display: flex; align-items: center; gap: 25px; margin-left: 22px; }
.exts .bar { margin: 0 -2px; }
.dots { margin-left: 4px; }
.bar { width: 2px; height: 20px; background: #5f1831; flex: none; }
.bookmarks { display: flex; align-items: center; height: 50px; gap: 24px; padding: 0 17px 2px 23px; font-size: 14px; }
.bookmarks .bar { margin: 0 -5px; }
.bookmarks a { display: flex; align-items: center; gap: 9px; white-space: nowrap; }
.bookmarks .site { gap: 7px; margin-right: -3px; }
.bookmarks a svg { width: 20px; height: 20px; }

/* Grafana frame */
.view { flex: 1; min-height: 0; display: flex; }
.app { flex: 1; min-width: 0; overflow: hidden; }
.scroll { width: 19px; background: #2c2c2c; display: flex; flex-direction: column; align-items: center; justify-content: space-between; padding: 6px 0 5px; }
.up { border: 6px solid transparent; border-top: 0; border-bottom: 9px solid #9f9f9f; }
.down { border: 6px solid transparent; border-bottom: 0; border-top: 9px solid #9f9f9f; }
.thumb { width: 10px; border-radius: 5px; background: #9f9f9f; }
.scroll .thumb { flex: 0 0 83%; margin: 0 0 104px; }
.gbar { height: 25px; background: #181b1f; border-bottom: 1px solid #2c2e33; display: flex; align-items: center; padding: 0 9px 2px 1px; font-size: 9px; }
.glogo { width: 36px; height: 24px; border: 2px solid #3d62b5; border-radius: 3px; gap: 3px; color: #8e9099; }
.crumbs { display: flex; gap: 6px; flex: 1; padding-left: 2px; color: #8e9099; }
.crumbs a { color: #ccccdc; font-weight: 500; }
.search { width: 220px; height: 20px; border: 1px solid #35373d; border-radius: 2px; background: #111217; display: flex; align-items: center; gap: 4px; padding: 0 5px 0 4px; color: #8e9099; margin-right: 9px; }
.search input { flex: 1; }
.search input::placeholder { color: #8e9099; opacity: 1; }
kbd { font: 8px Inter, sans-serif; }
.gbar svg, .time svg { fill: none; stroke: #9a9ba5; flex: none; }
.glogo svg { stroke: none; }
.plain { gap: 3px; color: #9a9ba5; }
.sep { width: 1px; height: 15px; background: #33353b; margin: 0 8px 0 7px; }
.gbar .me { stroke: none; }
.second { justify-content: flex-end; padding: 0 5px 0 0; }
.second .sep { margin: 0 8px 0 13px; }
.second .btn + .sep { margin: 0 4px 0 8px; }
.btn { height: 15px; padding: 0 5px; border-radius: 2px; background: #2a2c31; font-size: 8px; font-weight: 500; gap: 3px; }
.pair { display: flex; gap: 1px; margin-left: 4px; }
.pair .btn:first-child { padding: 0 6px; }
.blue { background: #3d71d9; color: #fff; }
.pair .btn:last-child { padding: 0 3px; }
.vars { display: flex; padding: 10px 10px 1px 11px; gap: 6px; }
.var { display: flex; height: 20px; font-size: 9px; }
.var label { border: 1px solid #35373d; background: #181b1f; padding: 0 4px; line-height: 18px; font-size: 8px; font-weight: 500; }
.sel { display: flex; align-items: center; border: 1px solid #35373d; border-left: 0; padding: 0 7px 0 5px; color: #ccccdc; }
.sel select { flex: 1; appearance: none; }
.sel svg { width: 7px; height: 7px; flex: none; }
.w30 { width: 30px; }
.w40 { width: 40px; }
.w76 { width: 76px; }
.time { display: flex; height: 20px; font-size: 9px; font-weight: 500; }
.time button { border: 1px solid #35373d; background: #1f2227; padding: 0 6px; gap: 5px; }
.time button + button { border-left: 0; }
.row { height: 29px; display: flex; align-items: center; gap: 4px; padding: 0 0 2px 15px; font-size: 10px; font-weight: 500; }
.row svg { width: 9px; height: 9px; }

/* Panels */
.grid { display: grid; grid-template-columns: repeat(24, minmax(0, 1fr)); gap: 5px; padding: 0 10px; }
.two { grid-template-rows: 66px 66px; }
.charts { grid-template-rows: 185px; }
.pods { grid-template-rows: 137px 185px; }
.panel { display: flex; flex-direction: column; background: #181b1f; border: 1px solid #2a2c31; border-radius: 2px; overflow: hidden; min-width: 0; }
.panel h3 { flex: none; height: 19px; padding: 0 5px 1px; display: flex; align-items: center; gap: 11px; font-size: 9px; font-weight: 500; white-space: nowrap; }
.c2 { grid-column: span 2; } .c3 { grid-column: span 3; } .c4 { grid-column: span 4; } .c5 { grid-column: span 5; }
.c6 { grid-column: span 6; } .c7 { grid-column: span 7; } .c8 { grid-column: span 8; } .c9 { grid-column: span 9; } .c15 { grid-column: span 15; }
.tall { grid-row: span 2; }
.stat { flex: 1; min-height: 0; display: flex; align-items: center; justify-content: center; font-weight: 500; color: #fff; line-height: 1; white-space: nowrap; }
.fill { background: linear-gradient(120deg, #5a984e, #82b664); }
.s30 { font-size: 30px; } .s56 { font-size: 56px; } .s84 { font-size: 84px; }
.stat small { font-size: 18px; }
.green { color: #7eb86c; }
.bluetext { color: #6491ea; }
.inf { font-size: 81px; font-weight: 700; }
.none { flex: 1; display: flex; align-items: center; justify-content: center; font-size: 12px; color: #8e9099; }

table { border-collapse: collapse; table-layout: fixed; width: 890px; margin: 4px 0 0 5px; font-size: 9px; color: #bcbcc9; }
.k1 { width: 112px; } .k2 { width: 70px; } .k3 { width: 118px; } .k4 { width: 155px; } .k5 { width: 186px; } .k6 { width: 71px; } .k7 { width: 101px; } .k8 { width: 77px; }
th { height: 20px; padding: 0 4px; text-align: left; font-weight: 500; color: #ccccdc; white-space: nowrap; }
td { height: 23px; padding: 0 0 2px 4px; border-top: 1px solid #2a2c31; border-right: 1px solid #2a2c31; white-space: nowrap; }
th:last-child { text-align: center; }
td:last-child { background: linear-gradient(120deg, #68ab59, #84bf73); text-align: center; color: #fff; padding: 0 0 2px; border-color: #4a6a44; border-right: 0; font-weight: 500; }
.tfoot { width: 890px; margin: 15px 0 0 5px; border-top: 1px solid #24262b; }

/* Time series */
.chart { display: grid; grid-template-columns: var(--axis) 1fr; grid-template-rows: var(--h) 15px; padding: 11px 9px 0 0; }
.y { display: flex; flex-direction: column; justify-content: space-between; margin: var(--ym); padding-right: 4px; text-align: right; font-size: 8px; line-height: 12px; white-space: nowrap; }
.plot { background: linear-gradient(90deg, #212429 1px, transparent 1px) var(--gx) 0 / var(--gw) 100%, linear-gradient(#24272c 1px, transparent 1px) 0 var(--gy) / 100% var(--gh); }
.plot svg { display: block; width: 100%; height: 100%; }
.x { grid-column: 2; display: grid; grid-template-columns: repeat(12, 1fr); margin: 0 -5px 0 5px; text-align: center; font-size: 8px; line-height: 16px; }
.cpu { --axis: 31px; --h: 104px; --ym: -6px 0; --gx: 23px; --gw: 8.333%; --gy: 0px; --gh: 20%; }
.mem { --axis: 40px; --h: 104px; --ym: 10px 0 19px; --gx: 22px; --gw: 8.333%; --gy: 16px; --gh: 32px; }
.net { --axis: 58px; --h: 118px; --ym: 1px 0 2px; --gx: 21px; --gw: 8.333%; --gy: 7px; --gh: 34px; }
.api { --axis: 24px; --h: 118px; --ym: 0 0 -5px; --gx: 22px; --gw: 8.333%; --gy: 5px; --gh: 28px; }
.n2 { --axis: 58px; --h: 118px; --ym: -6px 0 74px; --gx: 29px; --gw: 5.556%; --gy: 0px; --gh: 19px; }
.n3 { --axis: 24px; --h: 118px; --ym: -6px 0 88px; --gx: 32px; --gw: 5.556%; --gy: 0px; --gh: 24px; }
.n4 { --axis: 22px; --h: 118px; --ym: -6px 0 74px; --gx: 31px; --gw: 5.556%; --gy: 0px; --gh: 19px; }
.net { grid-template-columns: 18px 40px 1fr; }
.net .x { grid-column: 3; }
.ylab { writing-mode: vertical-rl; transform: rotate(180deg); text-align: center; font-size: 8px; line-height: 18px; }
.legend { display: flex; flex-wrap: wrap; column-gap: 6px; padding: 0 8px; font-size: 8px; line-height: 13px; white-space: nowrap; }
.legend span { display: flex; align-items: center; gap: 4px; }
.legend span::before { content: ""; width: 8px; height: 3px; border-radius: 1px; background: var(--c); margin-right: 1px; }
.g { --c: #73bf69; } .ye { --c: #eccb48; } .b { --c: #8ab8ff; } .o { --c: #ec7f35; } .r { --c: #e0504f; } .db { --c: #5a8ff0; } .p { --c: #b077d9; } .dp { --c: #6f5f9f; }

/* Gauges */
.gauge { flex: 1; display: flex; align-items: flex-start; justify-content: center; padding-top: 5px; }
.minis { flex: 1; display: flex; min-height: 0; padding: 5px 5px 5px 0; }
.minilist { flex: 1; display: flex; flex-direction: column; align-items: center; padding-left: 18px; }
.minilist svg { flex: none; }
.minilist p { font-size: 13px; line-height: 32px; white-space: nowrap; }
.minibar { width: 13px; background: #2c2c2c; display: flex; flex-direction: column; align-items: center; padding: 4px 0; gap: 5px; }
.minibar .up, .minibar .down { border-left-width: 4px; border-right-width: 4px; }
.minibar .up { border-bottom-width: 7px; } .minibar .down { border-top-width: 7px; }
.minibar .thumb { width: 7px; flex: 0 0 54px; margin-bottom: auto; }
.bars { padding: 5px 9px 0 5px; }
.bargauge { display: grid; grid-template-columns: 1fr 96px; grid-template-rows: 17px 19px; align-items: center; }
.bargauge p { grid-column: 1 / 3; font-size: 11px; line-height: 17px; }
.bargauge output { text-align: right; font-size: 19px; line-height: 19px; color: #7eb86c; padding-right: 6px; white-space: nowrap; }
.bargauge small { font-size: 12px; }
.cells { height: 19px; background: linear-gradient(90deg, #5a8c50, #7fb86d 45%, #629657 84%, #181b1f 84%) 0 0 / 1.724% 100%; }
.cells.low { background: linear-gradient(90deg, #73b864 8px, transparent 8px) 0 0 / 6px 100% no-repeat, linear-gradient(90deg, #3d2428 84%, #181b1f 84%) 0 0 / 1.724% 100%; }

/* Windows taskbar */
.taskbar { flex: none; height: 60px; display: flex; align-items: center; padding: 0 26px 0 24px; background: linear-gradient(90deg, #e5dcdd, #dddbdd 14%, #c3d5dc 32%, #cfe0e8 46%, #cdd3d5 62%, #d8d8d8 78%, #e6dce0 92%, #e0d2d8); border-top: 1px solid #b9bcbe; font-family: "Open Sans", sans-serif; font-size: 15px; color: #1c1c1c; }
.weather { position: relative; margin-right: 258px; }
.weather b { position: absolute; right: 0; top: -2px; width: 19px; height: 19px; border-radius: 10px; background: #b92b20; color: #fff; font-size: 14px; line-height: 19px; font-weight: 400; }
.tsearch { width: 272px; height: 39px; margin: 0 9px 0 17px; border-radius: 20px; background: #e6ebec; border: 1px solid #c0cbcf; display: flex; align-items: center; gap: 11px; padding-left: 13px; font-size: 16px; }
.tsearch input { flex: 1; }
.tsearch input::placeholder { color: #555; opacity: 1; }
.apps { display: flex; gap: 7px; }
.apps button { position: relative; width: 48px; height: 48px; border-radius: 5px; }
.apps svg { width: 31px; height: 31px; }
.apps .on { background: #eceeee; margin-left: 2px; }
.run::after { content: ""; position: absolute; bottom: 0; left: 20px; width: 8px; height: 3px; border-radius: 2px; background: #777e84; }
.on::after { left: 14px; width: 20px; background: #4f6b7c; }
.tray { display: flex; gap: 20px; margin-right: 24px; }
.tray svg { width: 20px; height: 20px; }
.lang { text-align: center; line-height: 20px; }
.sys { display: flex; gap: 10px; margin: 0 22px; }
.clock { text-align: right; line-height: 20px; margin-right: 10px; }
```
